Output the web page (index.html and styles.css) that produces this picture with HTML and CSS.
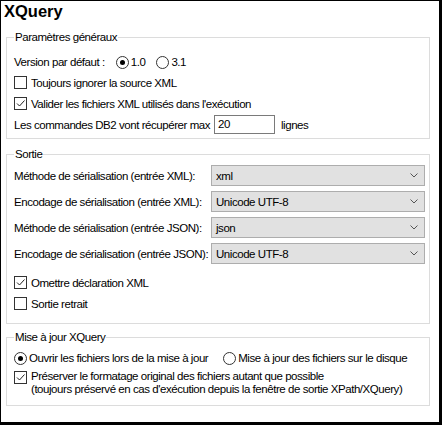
FILE: index.html
```html
<!DOCTYPE html>
<html lang="fr">
<head>
<meta charset="utf-8">
<title>XQuery</title>
<link rel="stylesheet" href="styles.css">
</head>
<body>
<div class="panel">
  <h1 class="title">XQuery</h1>

  <fieldset class="group g1">
    <legend>Paramètres généraux</legend>
    <div class="line version">
      <span class="lbl">Version par défaut :</span>
      <span class="opt v1"><span class="rb on"></span>1.0</span>
      <span class="opt"><span class="rb"></span>3.1</span>
    </div>
    <div class="line chk"><span class="cb"></span>Toujours ignorer la source XML</div>
    <div class="line chk"><span class="cb on"><svg viewBox="0 0 11 11" width="11" height="11"><path d="M2 5.5 L4.5 8 L9.5 2.5" fill="none" stroke="#222" stroke-width="1"/></svg></span>Valider les fichiers XML utilisés dans l'exécution</div>
    <div class="line db2"><span>Les commandes DB2 vont récupérer max</span><span class="input">20</span><span>lignes</span></div>
  </fieldset>

  <fieldset class="group g2">
    <legend>Sortie</legend>
    <div class="form">
      <span class="flbl">Méthode de sérialisation (entrée XML):</span>
      <span class="combo c1">xml<svg class="chev" viewBox="0 0 8 5" width="8" height="5"><path d="M0.5 0.5 L4 4 L7.5 0.5" fill="none" stroke="#555" stroke-width="1"/></svg></span>
      <span class="flbl">Encodage de sérialisation (entrée XML):</span>
      <span class="combo c2">Unicode UTF-8<svg class="chev" viewBox="0 0 8 5" width="8" height="5"><path d="M0.5 0.5 L4 4 L7.5 0.5" fill="none" stroke="#555" stroke-width="1"/></svg></span>
      <span class="flbl">Méthode de sérialisation (entrée JSON):</span>
      <span class="combo c3">json<svg class="chev" viewBox="0 0 8 5" width="8" height="5"><path d="M0.5 0.5 L4 4 L7.5 0.5" fill="none" stroke="#555" stroke-width="1"/></svg></span>
      <span class="flbl">Encodage de sérialisation (entrée JSON):</span>
      <span class="combo c4">Unicode UTF-8<svg class="chev" viewBox="0 0 8 5" width="8" height="5"><path d="M0.5 0.5 L4 4 L7.5 0.5" fill="none" stroke="#555" stroke-width="1"/></svg></span>
    </div>
    <div class="line chk omit"><span class="cb on"><svg viewBox="0 0 11 11" width="11" height="11"><path d="M2 5.5 L4.5 8 L9.5 2.5" fill="none" stroke="#222" stroke-width="1"/></svg></span>Omettre déclaration XML</div>
    <div class="line chk"><span class="cb"></span>Sortie retrait</div>
  </fieldset>

  <fieldset class="group g3">
    <legend>Mise à jour XQuery</legend>
    <div class="line radios">
      <span class="opt first"><span class="rb on"></span>Ouvrir les fichiers lors de la mise à jour</span>
      <span class="opt"><span class="rb"></span>Mise à jour des fichiers sur le disque</span>
    </div>
    <div class="multi"><span class="cb on"><svg viewBox="0 0 11 11" width="11" height="11"><path d="M2 5.5 L4.5 8 L9.5 2.5" fill="none" stroke="#222" stroke-width="1"/></svg></span><span class="mtext">Préserver le formatage original des fichiers autant que possible<br>(toujours préservé en cas d'exécution depuis la fenêtre de sortie XPath/XQuery)</span></div>
  </fieldset>
</div>
</body>
</html>
```

FILE: styles.css
```css
html, body {
  margin: 0;
  padding: 0;
  background: #fff;
}
body {
  font-family: "Liberation Sans", Arial, sans-serif;
  font-size: 11.5px;
  letter-spacing: -0.45px;
  color: #000;
}
.panel {
  width: 442px;
  height: 425px;
  box-sizing: border-box;
  border-style: solid;
  border-color: #000;
  border-width: 1px 3px 3px 1px;
  padding: 0 9px 0 5px;
  display: flex;
  flex-direction: column;
}
.title {
  margin: 0 0 0 -2px;
  font-size: 16.5px;
  line-height: 20px;
  font-weight: bold;
  letter-spacing: 0;
}
.group {
  margin: 0;
  border: 1px solid #dcdcdc;
  padding: 0 4px 0 7px;
  min-width: 0;
}
.group legend {
  padding: 0 1px;
  line-height: 12px;
  margin-left: 0;
}
.g1 { margin-top: 10px; padding-top: 9px; padding-bottom: 4px; }
.g2 { margin-top: 9px; padding-top: 5px; padding-bottom: 9px; }
.g3 { margin-top: 7px; padding-top: 5px; padding-bottom: 9px; }

.line {
  display: flex;
  align-items: center;
  height: 20px;
  white-space: nowrap;
}
.version .lbl { margin-right: 11px; }
.opt {
  display: inline-flex;
  align-items: center;
  margin-right: 14px;
}
.version .v1 { margin-right: 11px; }
.rb {
  width: 11px;
  height: 11px;
  border: 1px solid #333;
  border-radius: 50%;
  box-sizing: content-box;
  margin-right: 2px;
  position: relative;
  background: #fff;
}
.rb.on::after {
  content: "";
  position: absolute;
  left: 3px;
  top: 3px;
  width: 5px;
  height: 5px;
  border-radius: 50%;
  background: #000;
}
.cb {
  width: 11px;
  height: 11px;
  border: 1px solid #333;
  background: #fff;
  margin-right: 4px;
  flex: none;
  display: flex;
}
.chk { height: 21px; }
.db2 { height: 19px; margin-top: 1px; }
.input {
  height: 17px;
  border: 1px solid #7a7a7a;
  margin: 0 6px 0 4px;
  padding-left: 3px;
  box-sizing: content-box;
  width: 56px;
  display: flex;
  align-items: center;
  line-height: 17px;
}

.form {
  display: grid;
  grid-template-columns: 197px 1fr;
  row-gap: 5px;
  align-items: center;
}
.combo {
  height: 19px;
  border: 1px solid #adadad;
  background: #e1e1e1;
  display: flex;
  align-items: center;
  padding-left: 4px;
  position: relative;
}
.chev {
  position: absolute;
  right: 6px;
  top: 7px;
}
.omit { margin-top: 8px; }

.radios .first { margin-right: 15px; }
.multi {
  display: flex;
  align-items: flex-start;
  margin-top: 2px;
}
.multi .cb { margin-top: 1px; }
.mtext { line-height: 13px; }
```
